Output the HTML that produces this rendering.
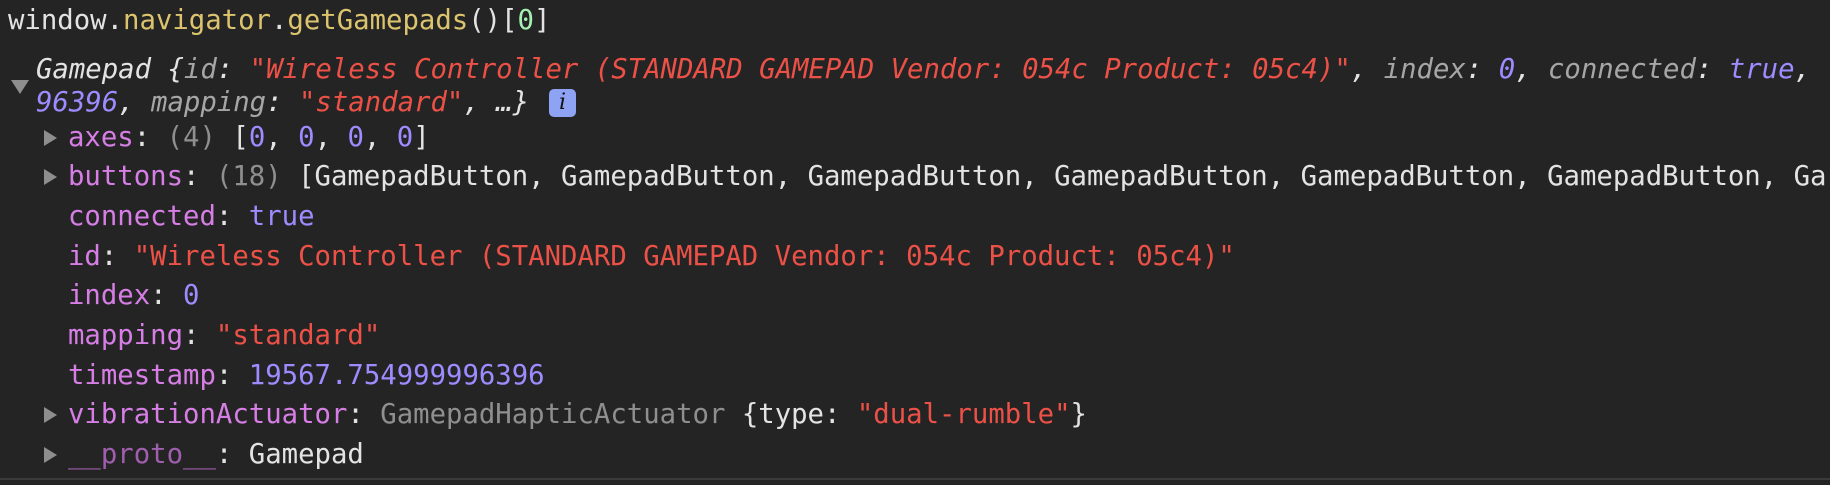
<!DOCTYPE html>
<html><head><meta charset="utf-8"><style>
html,body{margin:0;padding:0;background:#242424;width:1830px;height:485px;overflow:hidden}
body{font-family:"DejaVu Sans Mono","Liberation Mono",monospace;font-size:27.3px;color:#e3e3e3;position:relative}
.l{position:absolute;white-space:nowrap;line-height:32px;height:32px}
.y{color:#dcc46e}.g{color:#a6efb2}.r{color:#ec5147}.n{color:#9d8cff}.k{color:#a6a6a6}
.p{color:#d77ee6}.pd{color:#a05eae}.d{color:#8f8f8f}.i{font-style:italic}
.tri{position:absolute;width:0;height:0}
.tr{border-top:8px solid transparent;border-bottom:8px solid transparent;border-left:13px solid #8e8e8e}
.td{border-left:9px solid transparent;border-right:9px solid transparent;border-top:14px solid #8e8e8e}
.badge{position:absolute;width:27px;height:28px;background:#8fa3f5;border-radius:5px;color:#111;text-align:center;line-height:28px;font-family:"DejaVu Serif",serif;font-style:italic;font-size:22px}
</style></head><body>
<div class="l" style="left:8px;top:5px">window.<span class="y">navigator</span>.<span class="y">getGamepads</span>()[<span class="g">0</span>]</div>
<div class="tri td" style="left:11px;top:80px"></div>
<div class="l i" style="left:36px;top:54px">Gamepad {<span class="k">id</span>: <span class="r">"Wireless Controller (STANDARD GAMEPAD Vendor: 054c Product: 05c4)"</span>, <span class="k">index</span>: <span class="n">0</span>, <span class="k">connected</span>: <span class="n">true</span>,</div>
<div class="l i" style="left:36px;top:87px"><span class="n">96396</span>, <span class="k">mapping</span>: <span class="r">"standard"</span>, …}</div>
<div class="badge" style="left:549px;top:89px">i</div>
<div class="tri tr" style="left:44px;top:130px"></div>
<div class="l" style="left:68px;top:122px"><span class="p">axes</span>: <span class="d">(4)</span> [<span class="n">0</span>, <span class="n">0</span>, <span class="n">0</span>, <span class="n">0</span>]</div>
<div class="tri tr" style="left:44px;top:169px"></div>
<div class="l" style="left:68px;top:161px"><span class="p">buttons</span>: <span class="d">(18)</span> [GamepadButton, GamepadButton, GamepadButton, GamepadButton, GamepadButton, GamepadButton, Ga</div>
<div class="l" style="left:68px;top:201px"><span class="p">connected</span>: <span class="n">true</span></div>
<div class="l" style="left:68px;top:241px"><span class="p">id</span>: <span class="r">"Wireless Controller (STANDARD GAMEPAD Vendor: 054c Product: 05c4)"</span></div>
<div class="l" style="left:68px;top:280px"><span class="p">index</span>: <span class="n">0</span></div>
<div class="l" style="left:68px;top:320px"><span class="p">mapping</span>: <span class="r">"standard"</span></div>
<div class="l" style="left:68px;top:360px"><span class="p">timestamp</span>: <span class="n">19567.754999996396</span></div>
<div class="tri tr" style="left:44px;top:407px"></div>
<div class="l" style="left:68px;top:399px"><span class="p">vibrationActuator</span>: <span class="d">GamepadHapticActuator</span> {type: <span class="r">"dual-rumble"</span>}</div>
<div class="tri tr" style="left:44px;top:447px"></div>
<div class="l" style="left:68px;top:439px"><span class="pd">__proto__</span>: Gamepad</div>
<div style="position:absolute;left:0;top:478px;width:1830px;height:2px;background:#3a3a3a"></div>
</body></html>
